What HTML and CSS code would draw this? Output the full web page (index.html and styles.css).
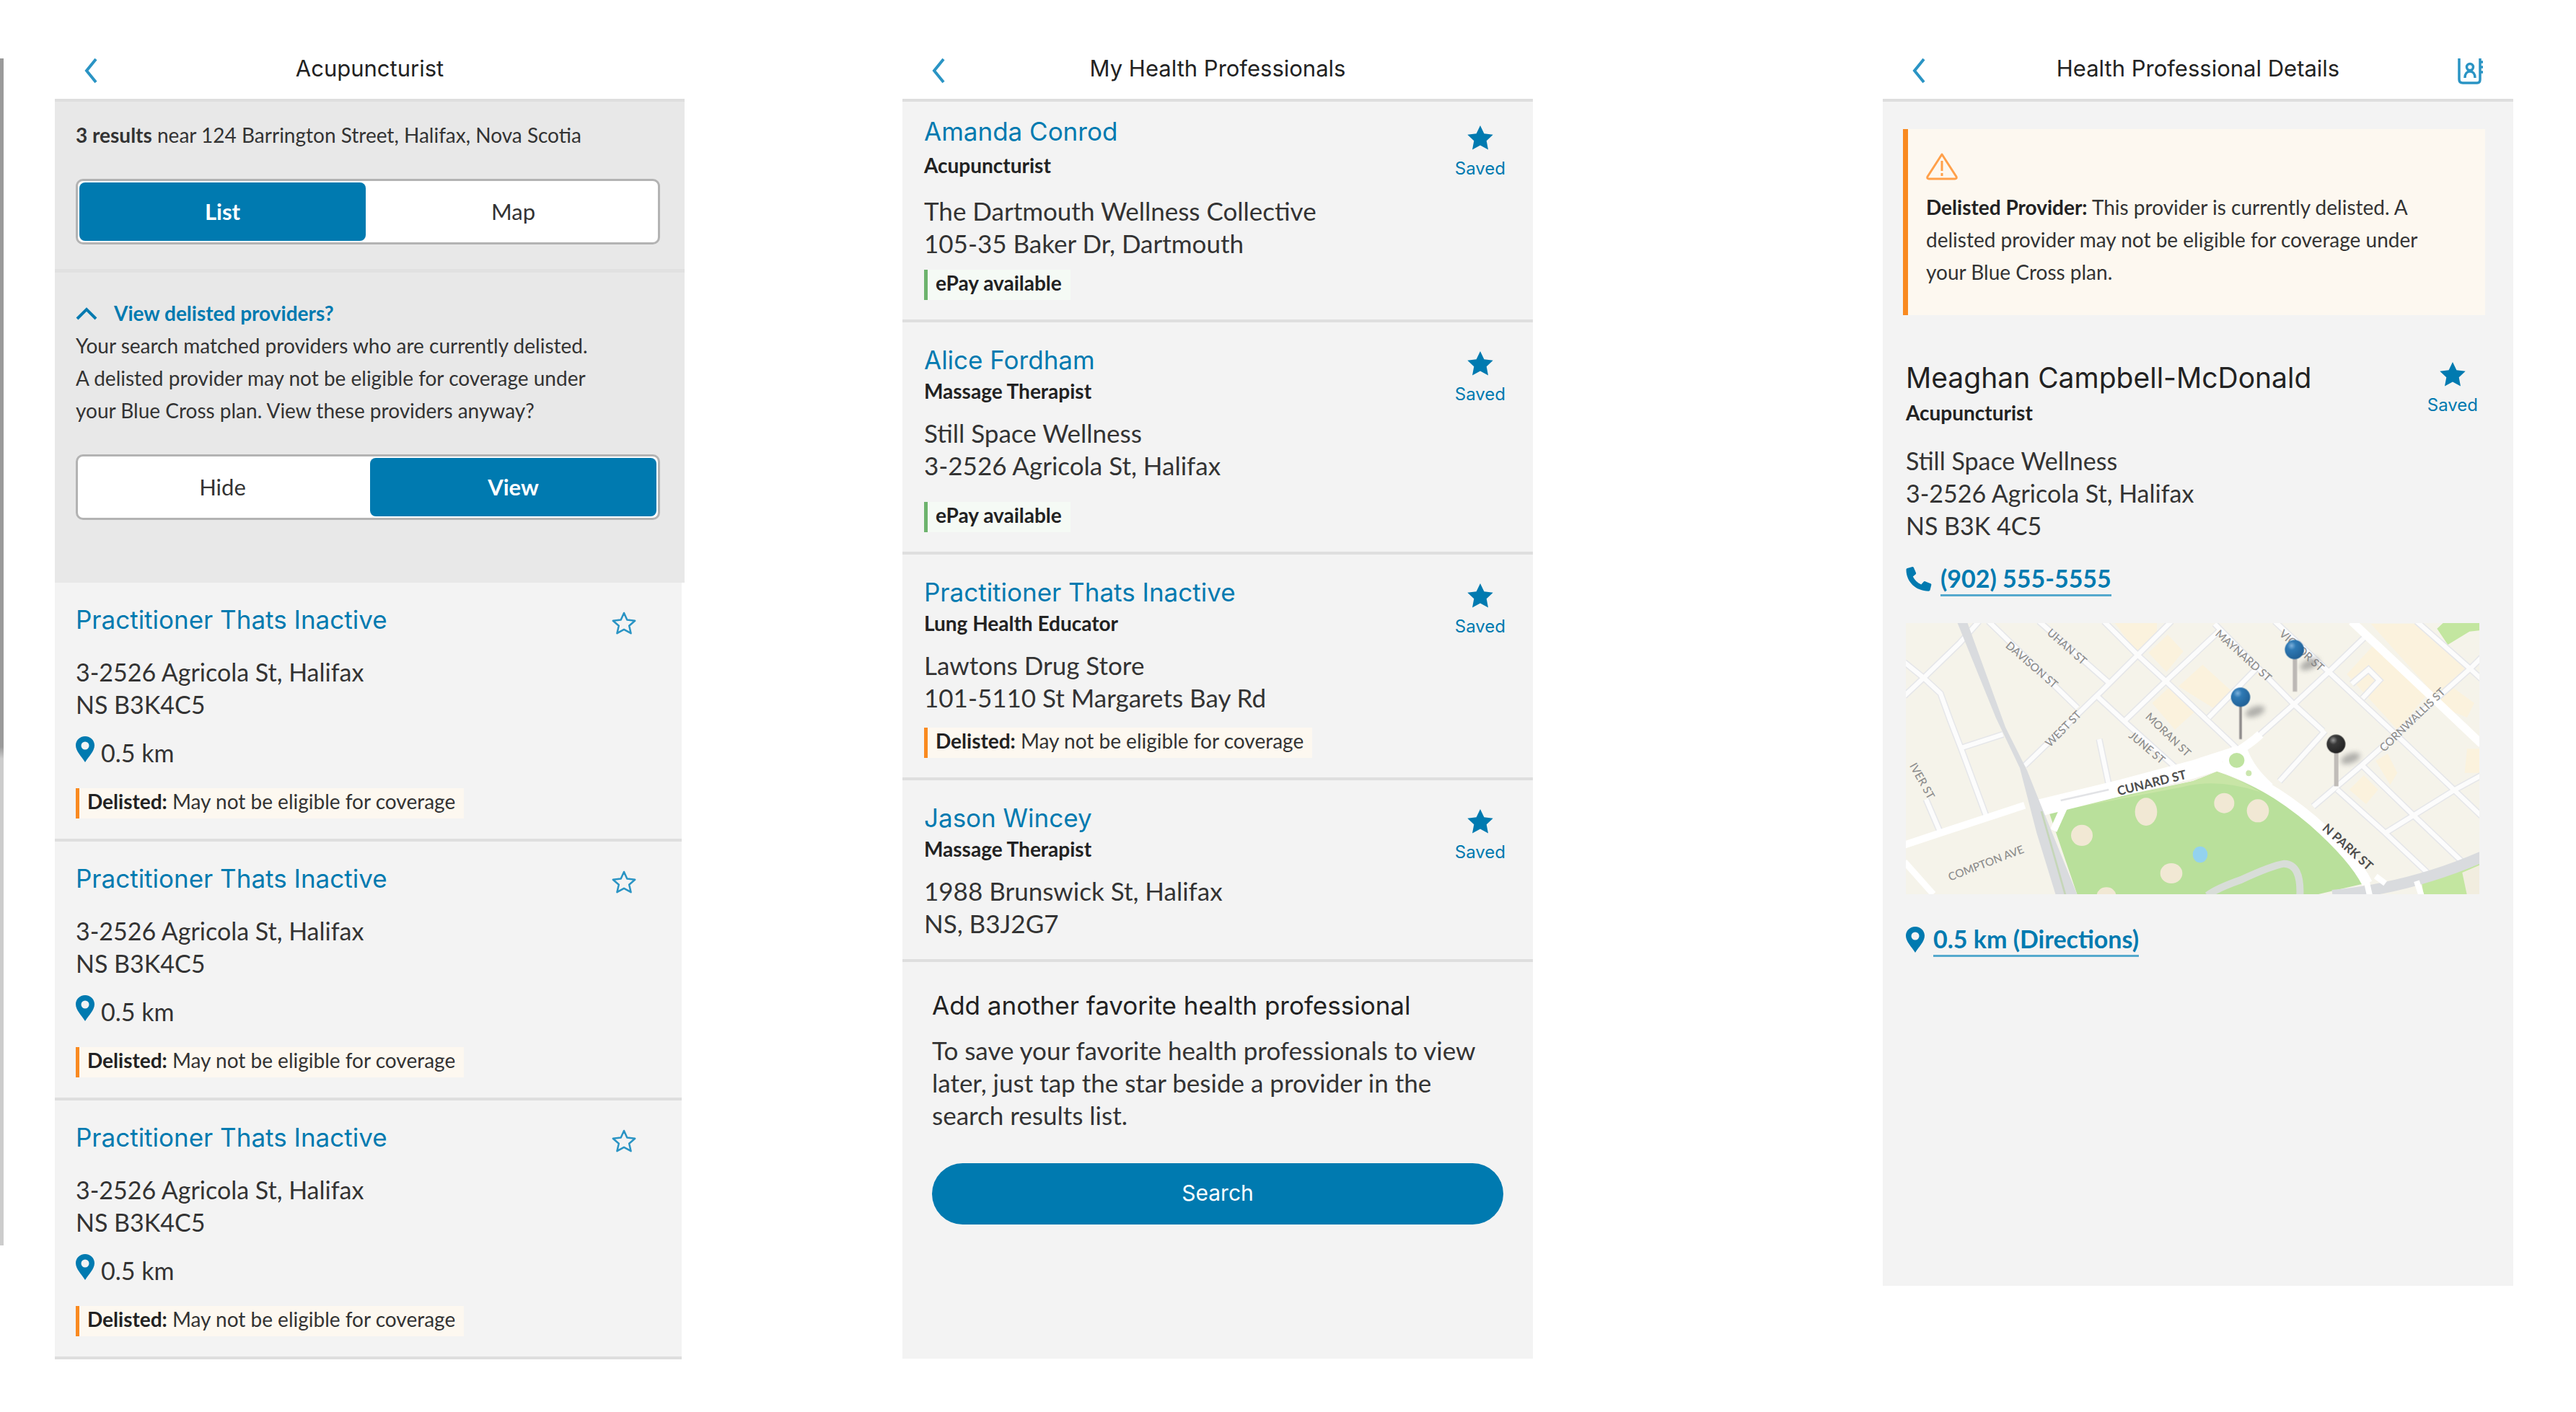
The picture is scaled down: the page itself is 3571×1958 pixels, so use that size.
FILE: index.html
```html
<!DOCTYPE html>
<html lang="en">
<head>
<meta charset="utf-8">
<meta name="viewport" content="width=device-width, initial-scale=1">
<title>Health Professionals</title>
<link rel="stylesheet" href="styles.css">
</head>
<body>
<svg class="sprite" aria-hidden="true">
  <symbol id="chevron-left" viewBox="0 0 20 36"><path d="M17 2 4 18l13 16" fill="none" stroke="currentColor" stroke-width="4"/></symbol>
  <symbol id="chevron-up" viewBox="0 0 30 18"><path d="M2 16 15 3l13 13" fill="none" stroke="currentColor" stroke-width="4"/></symbol>
  <symbol id="star" viewBox="0 0 36 34"><path d="M18 0l5.400 11.200 12.300 1.600-9 8.500 2.300 12.200L18 27.600 7 33.500l2.300-12.200-9-8.500 12.300-1.600z" fill="currentColor"/></symbol>
  <symbol id="star-outline" viewBox="0 0 36 34"><path d="M18 3l4.300 9.600 10.900 1.200-8 7 2.400 10.400L18 25.900l-9.600 5.300 2.400-10.400-8-7 10.900-1.200z" fill="none" stroke="currentColor" stroke-width="2.500" stroke-linejoin="round"/></symbol>
  <symbol id="pin" viewBox="0 0 26 36"><path d="M13 0C5.500 0 0 5.700 0 12.600 0 21 8 28 13 36c5-8 13-15 13-23.400C26 5.700 20.500 0 13 0zm0 7.500a5.500 5.500 0 1 1 0 11 5.500 5.500 0 0 1 0-11z" fill="currentColor" fill-rule="evenodd"/></symbol>
  <symbol id="phone" viewBox="0 0 36 34"><path d="M2 2 9 0c1 0 1.500.4 2 1.200l3 7c.3.900.1 1.500-.6 2.200L9.800 13.500c2.500 5 6.200 8.600 11.500 11l3.300-3.700c.6-.7 1.400-.9 2.200-.5l7.500 3c.9.400 1.200 1 1 2L33.600 32c-.3 1.200-1 1.700-2.200 1.700C14 33.500.5 21 .5 4 .5 2.800 1 2.300 2 2z" fill="currentColor"/></symbol>
  <symbol id="contact" viewBox="0 0 38 38"><g fill="none" stroke="currentColor" stroke-width="3.500"><path d="M3 1v29q0 5 5 5h20q4 0 4-5V1"/><path d="M32 6h4M32 13h4M32 20h4"/><circle cx="18" cy="13" r="4.500"/><path d="M11 28c0-6 3-9 7-9s7 3 7 9"/></g></symbol>
  <symbol id="warning" viewBox="0 0 44 38"><path d="M22 2 42 33q1 3-2 3H4q-3 0-2-3zM22 11v14M22 28v4" fill="none" stroke="currentColor" stroke-width="3" stroke-linejoin="round"/></symbol>
</svg>

<div class="board">
  <div class="edge"></div>

  <main class="screen screen-results">
    <header class="bar">
      <button class="icon-button" type="button" aria-label="Back"><svg class="chevron"><use href="#chevron-left"/></svg></button>
      <h1 class="bar-title">Acupuncturist</h1>
    </header>
    <section class="filters">
      <p class="small"><strong>3 results</strong> near 124 Barrington Street, Halifax, Nova Scotia</p>
      <div class="segments" role="group" aria-label="Result display">
        <button class="segment is-on" type="button" aria-pressed="true">List</button>
        <button class="segment" type="button" aria-pressed="false">Map</button>
      </div>
    </section>
    <section class="filters filters-delisted">
      <button class="disclosure" type="button" aria-expanded="true"><svg><use href="#chevron-up"/></svg>View delisted providers?</button>
      <p class="small">Your search matched providers who are currently delisted.<br>A delisted provider may not be eligible for coverage under<br>your Blue Cross plan. View these providers anyway?</p>
      <div class="segments" role="group" aria-label="Delisted providers">
        <button class="segment" type="button" aria-pressed="false">Hide</button>
        <button class="segment is-on" type="button" aria-pressed="true">View</button>
      </div>
    </section>
    <ul class="results">
      <li class="result">
        <div>
          <a class="name" href="#">Practitioner Thats Inactive</a>
          <address>3-2526 Agricola St, Halifax<br>NS B3K4C5</address>
          <p class="distance"><svg class="pin"><use href="#pin"/></svg>0.5 km</p>
          <p class="tag tag-delisted"><strong>Delisted:</strong> May not be eligible for coverage</p>
        </div>
        <button class="save" type="button" aria-label="Save"><svg class="star"><use href="#star-outline"/></svg></button>
      </li>
      <li class="result">
        <div>
          <a class="name" href="#">Practitioner Thats Inactive</a>
          <address>3-2526 Agricola St, Halifax<br>NS B3K4C5</address>
          <p class="distance"><svg class="pin"><use href="#pin"/></svg>0.5 km</p>
          <p class="tag tag-delisted"><strong>Delisted:</strong> May not be eligible for coverage</p>
        </div>
        <button class="save" type="button" aria-label="Save"><svg class="star"><use href="#star-outline"/></svg></button>
      </li>
      <li class="result">
        <div>
          <a class="name" href="#">Practitioner Thats Inactive</a>
          <address>3-2526 Agricola St, Halifax<br>NS B3K4C5</address>
          <p class="distance"><svg class="pin"><use href="#pin"/></svg>0.5 km</p>
          <p class="tag tag-delisted"><strong>Delisted:</strong> May not be eligible for coverage</p>
        </div>
        <button class="save" type="button" aria-label="Save"><svg class="star"><use href="#star-outline"/></svg></button>
      </li>
    </ul>
  </main>

  <main class="screen screen-saved">
    <header class="bar">
      <button class="icon-button" type="button" aria-label="Back"><svg class="chevron"><use href="#chevron-left"/></svg></button>
      <h1 class="bar-title">My Health Professionals</h1>
    </header>
    <ul class="favorites">
      <li class="favorite favorite-lead">
        <div>
          <a class="name" href="#">Amanda Conrod</a>
          <p class="role">Acupuncturist</p>
          <address>The Dartmouth Wellness Collective<br>105-35 Baker Dr, Dartmouth</address>
          <p class="tag tag-epay"><strong>ePay available</strong></p>
        </div>
        <button class="saved" type="button"><svg class="star"><use href="#star"/></svg>Saved</button>
      </li>
      <li class="favorite favorite-roomy">
        <div>
          <a class="name" href="#">Alice Fordham</a>
          <p class="role">Massage Therapist</p>
          <address>Still Space Wellness<br>3-2526 Agricola St, Halifax</address>
          <p class="tag tag-epay"><strong>ePay available</strong></p>
        </div>
        <button class="saved" type="button"><svg class="star"><use href="#star"/></svg>Saved</button>
      </li>
      <li class="favorite">
        <div>
          <a class="name" href="#">Practitioner Thats Inactive</a>
          <p class="role">Lung Health Educator</p>
          <address>Lawtons Drug Store<br>101-5110 St Margarets Bay Rd</address>
          <p class="tag tag-delisted"><strong>Delisted:</strong> May not be eligible for coverage</p>
        </div>
        <button class="saved" type="button"><svg class="star"><use href="#star"/></svg>Saved</button>
      </li>
      <li class="favorite">
        <div>
          <a class="name" href="#">Jason Wincey</a>
          <p class="role">Massage Therapist</p>
          <address>1988 Brunswick St, Halifax<br>NS, B3J2G7</address>
        </div>
        <button class="saved" type="button"><svg class="star"><use href="#star"/></svg>Saved</button>
      </li>
    </ul>
    <section class="add">
      <h2>Add another favorite health professional</h2>
      <p>To save your favorite health professionals to view<br>later, just tap the star beside a provider in the<br>search results list.</p>
      <button class="search" type="button">Search</button>
    </section>
  </main>

  <main class="screen screen-details">
    <header class="bar">
      <button class="icon-button" type="button" aria-label="Back"><svg class="chevron"><use href="#chevron-left"/></svg></button>
      <h1 class="bar-title">Health Professional Details</h1>
      <button class="icon-button icon-button-end" type="button" aria-label="Add to contacts"><svg class="contact"><use href="#contact"/></svg></button>
    </header>
    <div class="details">
      <section class="alert">
        <svg><use href="#warning"/></svg>
        <p class="small"><strong>Delisted Provider:</strong> This provider is currently delisted. A<br>delisted provider may not be eligible for coverage under<br>your Blue Cross plan.</p>
      </section>
      <section class="profile">
        <div class="profile-head">
          <div>
            <h2 class="profile-name">Meaghan Campbell-McDonald</h2>
            <p class="role">Acupuncturist</p>
          </div>
          <button class="saved" type="button"><svg class="star"><use href="#star"/></svg>Saved</button>
        </div>
        <address>Still Space Wellness<br>3-2526 Agricola St, Halifax<br>NS B3K 4C5</address>
        <p class="contact-line"><svg class="phone"><use href="#phone"/></svg><a href="tel:9025555555">(902) 555-5555</a></p>
        <svg class="map" viewBox="6 7 2385 1128" role="img" aria-label="Map of the area around Cunard St and N Park St">
          <defs>
            <filter id="soft" x="-50%" y="-50%" width="200%" height="200%"><feGaussianBlur stdDeviation="11"/></filter>
            <radialGradient id="blue-head" cx=".35" cy=".3" r=".75"><stop offset="0" stop-color="#7fb2dc"/><stop offset=".3" stop-color="#2f7ab5"/><stop offset="1" stop-color="#205f94"/></radialGradient>
            <radialGradient id="dark-head" cx=".35" cy=".3" r=".75"><stop offset="0" stop-color="#999"/><stop offset=".3" stop-color="#3a3a3a"/><stop offset="1" stop-color="#222"/></radialGradient>
            <g id="streets">
              <path d="M0 170 80 235 150 300 190 410 240 540 340 810"/>
              <path d="M0 310 80 235 230 90 310 0"/>
              <path d="M240 525 410 470"/>
              <path d="M350 0 720 360"/>
              <path d="M560 0 850 255"/>
              <path d="M500 600 820 290 1110 0"/>
              <path d="M800 310 930 430 1130 610"/>
              <path d="M830 0 970 140 1110 270 1400 545"/>
              <path d="M920 410 1080 255 1320 30"/>
              <path d="M810 490 850 680"/>
              <path d="M90 740 150 880"/>
              <path d="M1265 400 1460 200"/>
              <path d="M1290 10 1620 345 1740 455"/>
              <path d="M1390 550 1620 345 1765 210 1920 60"/>
              <path d="M1540 0 1765 210 2070 495 2400 810"/>
              <path d="M1560 665 1750 455"/>
              <path d="M1700 770 1900 600 2360 190 2400 150"/>
              <path d="M1905 600 2110 800 2330 1010"/>
              <path d="M1800 700 2000 880 2180 1050"/>
              <path d="M2000 880 2290 700 2400 640"/>
              <path d="M1860 260 1930 200 1975 245 1905 320"/>
              <path d="M2130 0 2345 190 2400 240"/>
            </g>
          </defs>
          <rect width="2400" height="1140" fill="#f5f3ea"/>
          <g fill="#fbf2dd">
            <path d="M870 0h180v60l-80 75zM1015 130l80-75 65 70-70 85zM1030 340l75-70 120 90-100 90zM1140 270l100-90 120 110-60 80z"/>
            <path d="M1940 10h190l220 190-140 110zM1840 220l110-120 220 210-120 140zM2170 330l90-70 110 80-30 60zM1850 700l60-60 60 60-50 60zM1960 580l50-30 40 80-30 50zM2340 530h60v100h-70z"/>
          </g>
          <path d="M2215 30 2240 7h160v30l-50 5-90 55z" fill="#c3e6a0"/>
          <use href="#streets" fill="none" stroke="#e5e6e9" stroke-width="28"/>
          <use href="#streets" fill="none" stroke="#fcfcfc" stroke-width="19"/>
          <path d="M1860 0 2200 320 2400 510" fill="none" stroke="#fff" stroke-width="34"/>
          <path d="M0 930 150 880 500 765" fill="none" stroke="#fff" stroke-width="30"/>
          <path d="M0 1000 120 1135" fill="none" stroke="#fff" stroke-width="26"/>
          <path d="M600 790 1200 665 1300 625Q1520 700 1700 850 1860 980 1910 1060L1915 1090 1700 1140H720z" fill="#b9e09b"/>
          <path d="M680 780 1200 665 1300 625Q1380 650 1480 710 1300 650 1150 690z" fill="#c8e5a6"/>
          <path d="M2150 1080 2400 1000v140h-240z" fill="#c3e6a0"/>
          <path d="M2320 1045 2400 1010v130h-60z" fill="#f1eddf"/>
          <g fill="#f1e8d4">
            <ellipse cx="738" cy="890" rx="45" ry="44"/><ellipse cx="1005" cy="792" rx="46" ry="58"/><ellipse cx="1110" cy="1048" rx="46" ry="42"/><ellipse cx="1330" cy="756" rx="42" ry="42"/><ellipse cx="1470" cy="788" rx="46" ry="48"/><ellipse cx="840" cy="1140" rx="40" ry="34"/>
          </g>
          <ellipse cx="1230" cy="970" rx="31" ry="34" fill="#93d2ee"/>
          <path d="M1260 1140Q1300 1110 1400 1075 1530 1015 1580 1008 1650 1010 1645 1140" fill="none" stroke="#d8ddd8" stroke-width="30"/>
          <path d="M550 765 900 680 1200 600 1385 540" fill="none" stroke="#fff" stroke-width="44"/>
          <path d="M560 790 900 705 1200 632 1300 600Q1500 660 1700 830 1870 980 1925 1090" fill="none" stroke="#fff" stroke-width="44"/>
          <path d="M650 745 850 700" fill="none" stroke="#e2e3e6" stroke-width="8"/>
          <path d="M1380 545Q1450 500 1480 470M1410 540Q1440 620 1520 690" fill="none" stroke="#fff" stroke-width="36"/>
          <path d="M665 770 620 870" fill="none" stroke="#fff" stroke-width="30"/>
          <ellipse cx="1382" cy="580" rx="58" ry="60" fill="#fff"/>
          <ellipse cx="1382" cy="578" rx="32" ry="31" fill="#bfe3a0"/>
          <circle cx="1432" cy="632" r="12" fill="#cbe6ae"/>
          <path d="M218 0H260L420 440 510 620 570 770 720 1140H630L550 880 480 610 380 400z" fill="#d9dbde"/>
          <path d="M570 790 670 1140" stroke="#c5d6b8" stroke-width="8"/>
          <path d="M1780 1140Q2100 1110 2400 980" fill="none" stroke="#d9dbde" stroke-width="46"/>
          <path d="M1915 1050 1935 1140M2130 1080 2150 1140M1960 1060 2000 1090" stroke="#fff" stroke-width="24"/>
          <g class="map-labels">
            <text transform="translate(418 105) rotate(41)">DAVISON ST</text>
            <text transform="translate(590 52) rotate(41)">UHAN ST</text>
            <text transform="translate(605 525) rotate(-45)">WEST ST</text>
            <text transform="translate(1000 400) rotate(44)">MORAN ST</text>
            <text transform="translate(930 480) rotate(40)">JUNE ST</text>
            <text transform="translate(1290 56) rotate(42)">MAYNARD ST</text>
            <text transform="translate(1556 56) rotate(42)">VICTOR ST</text>
            <text transform="translate(1995 545) rotate(-44)">CORNWALLIS ST</text>
            <text transform="translate(190 1080) rotate(-21)">COMPTON AVE</text>
            <text transform="translate(20 600) rotate(61)">IVER ST</text>
            <text class="map-main" transform="translate(890 725) rotate(-14)">CUNARD ST</text>
            <text class="map-main" transform="translate(1735 865) rotate(42)">N PARK ST</text>
          </g>
          <g fill="#777" opacity=".55" filter="url(#soft)"><ellipse cx="1685" cy="178" rx="42" ry="20" transform="rotate(-25 1685 178)"/><ellipse cx="1458" cy="375" rx="42" ry="20" transform="rotate(-20 1458 375)"/><ellipse cx="1855" cy="570" rx="42" ry="20" transform="rotate(-20 1855 570)"/></g>
          <path d="M1624 150V292" stroke="#bcb8b5" stroke-width="18"/>
          <path d="M1398 345V490" stroke="#8f8c8c" stroke-width="11"/>
          <path d="M1796 540V686" stroke="#c0bcb8" stroke-width="18"/>
          <circle cx="1622" cy="117" r="40" fill="url(#blue-head)"/>
          <circle cx="1398" cy="315" r="40" fill="url(#blue-head)"/>
          <circle cx="1795" cy="510" r="39" fill="url(#dark-head)"/>
        </svg>
        <p class="contact-line contact-directions"><svg class="pin"><use href="#pin"/></svg><a href="#">0.5 km (Directions)</a></p>
      </section>
    </div>
  </main>
</div>
</body>
</html>
```
FILE: styles.css
```css
:root {
  --blue: #007ab0;
  --ink: #333;
  --surface: #f3f3f3;
  --line: #dedede;
  --orange: #f98a20;
}

* { box-sizing: border-box; }

body {
  margin: 0;
  background: #fff;
  color: var(--ink);
  font: 34px/45px Lato, sans-serif;
}

h1, h2, p, ul { margin: 0; padding: 0; }
ul { list-style: none; }
address { font-style: normal; }

button {
  margin: 0;
  padding: 0;
  border: 0;
  background: none;
  color: inherit;
  font: inherit;
  cursor: pointer;
}

.sprite { display: none; }

/* Three screens side by side */
.board {
  display: grid;
  grid-template-columns: 76fr 873fr 302fr 874fr 485fr 874fr 87fr;
  align-items: start;
}
.screen { min-width: 0; }
.screen-results { grid-column: 2; }
.screen-saved { grid-column: 4; background: var(--surface); padding-bottom: 186px; }
.screen-details { grid-column: 6; background: var(--surface); padding-bottom: 456px; }

.edge {
  width: 5px;
  height: 1646px;
  margin-top: 81px;
  background: linear-gradient(#9a9a9a 58%, #ccc 59%);
}

/* Top bar */
.bar {
  display: grid;
  grid-template-columns: 1fr auto 1fr;
  align-items: start;
  padding: 74px 40px 21px;
  border-bottom: 4px solid var(--line);
  background: #fff;
}
.bar-title { font: 400 31px/42px Inter, sans-serif; color: #222; }
.icon-button { justify-self: start; height: 42px; padding-top: 6px; color: #2a94c4; }
.icon-button-end { justify-self: end; }
.icon-button svg { display: block; }
.chevron { width: 20px; height: 36px; }
.contact { width: 38px; height: 38px; }

.small { font-size: 28px; }

/* Search filters */
.filters {
  padding: 24px 34px 34px 29px;
  border-bottom: 5px solid #e1e1e1;
  background: #e8e8e8;
}
.filters-delisted { padding-top: 34px; padding-bottom: 87px; border-bottom: 0; }

.segments {
  display: grid;
  grid-template-columns: 1fr 1fr;
  gap: 6px;
  margin-top: 38px;
  padding: 2px;
  border: 3px solid #b3b3b3;
  border-radius: 10px;
  background: #fff;
}
.segment { height: 81px; border-radius: 8px; font-size: 31px; }
.segment.is-on { background: var(--blue); color: #fff; font-weight: 700; }

.disclosure {
  display: flex;
  align-items: center;
  gap: 23px;
  color: var(--blue);
  font-size: 28px;
  font-weight: 700;
}
.disclosure svg { width: 30px; height: 18px; }

/* Search results */
.results { margin-right: 4px; }
.result {
  display: flex;
  justify-content: space-between;
  align-items: start;
  padding: 29px 62px 28px 29px;
  border-bottom: 4px solid var(--line);
  background: var(--surface);
}
.name {
  display: block;
  color: var(--blue);
  font: 400 35px/45px Inter, sans-serif;
  text-decoration: none;
}
.result address { margin-top: 27px; }
.distance { display: flex; gap: 9px; margin-top: 22px; }
.pin { width: 26px; height: 36px; color: var(--blue); }
.star { display: block; width: 36px; height: 34px; }
.save { margin-top: 10px; color: #2a94c4; }

.tag {
  width: fit-content;
  padding: 0 12px 6px 11px;
  border-left: 5px solid;
  font-size: 28px;
  line-height: 36px;
}
.result .tag { margin-top: 27px; }
.tag strong { color: #222; }
.tag-delisted { border-left-color: var(--orange); background: #fdf8f0; }
.tag-epay { border-left-color: #6db36d; background: #f5faf5; }

/* Saved professionals */
.favorite {
  display: flex;
  justify-content: space-between;
  align-items: start;
  padding: 30px 38px 27px 30px;
  border-bottom: 4px solid var(--line);
}
.role { color: #222; font-size: 28px; font-weight: 700; line-height: 40px; }
.favorite address { margin-top: 16px; font-size: 35px; }
.favorite .tag { margin-top: 19px; }
.favorite-lead { padding-top: 19px; }
.favorite-lead .role { margin-top: 4px; }
.favorite-lead address { margin-top: 21px; }
.favorite-lead .tag { margin-top: 14px; }
.favorite-roomy .tag { margin-top: 28px; }

.saved {
  display: grid;
  justify-items: center;
  gap: 11px;
  color: var(--blue);
  font: 400 24px/30px Inter, sans-serif;
}
.favorite .saved { margin-top: 10px; }
.favorite-lead .saved { margin-top: 14px; }

.add { padding: 38px 41px 0; }
.add h2 { color: #222; font: 400 35px/45px Inter, sans-serif; }
.add p { margin-top: 17px; font-size: 35px; }
.search {
  width: 100%;
  height: 85px;
  margin-top: 44px;
  padding-bottom: 4px;
  border-radius: 43px;
  background: var(--blue);
  color: #fff;
  font: 400 30px/40px Inter, sans-serif;
}

/* Professional details */
.details { padding: 38px 39px 0 28px; }
.alert {
  padding: 33px 24px 37px 25px;
  border-left: 7px solid var(--orange);
  background: #fdf8f0;
}
.alert svg { display: block; width: 44px; height: 38px; margin-bottom: 15px; color: #ffa04a; }
.alert strong { color: #222; }
.profile { padding: 62px 8px 0 4px; }
.profile-head { display: flex; justify-content: space-between; align-items: start; }
.profile-name { color: #222; font: 400 39px/50px Inter, sans-serif; }
.profile .role { margin-top: 3px; }
.profile .saved { margin: 3px 2px 0 0; }
.profile address { margin-top: 24px; }
.contact-line { display: flex; align-items: center; gap: 12px; margin-top: 28px; }
.contact-line a {
  border-bottom: 3px solid #55a9cd;
  color: var(--blue);
  font-weight: 700;
  text-decoration: none;
}
.phone { width: 36px; height: 34px; color: var(--blue); }
.map { display: block; width: 100%; height: auto; margin-top: 37px; }
.map-labels { fill: #8d8d8d; font: 500 46px Lato, sans-serif; }
.map-main { fill: #4d4d4d; font-weight: 700; font-size: 52px; }
.contact-directions { margin-top: 39px; }
```
